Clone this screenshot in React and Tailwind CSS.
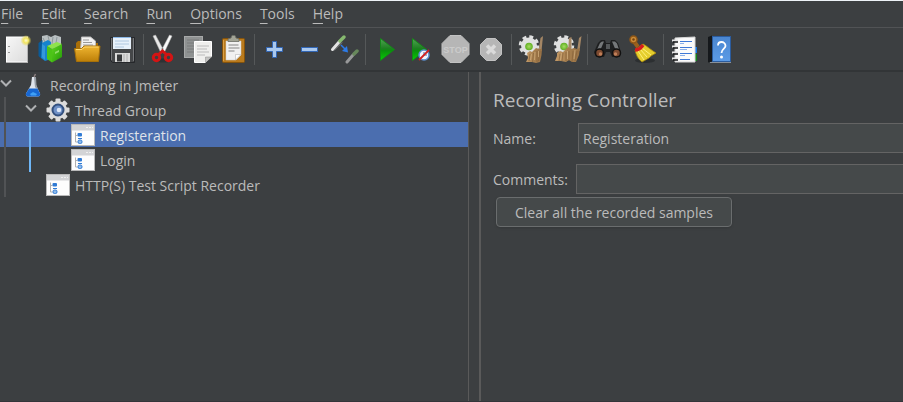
import React from "react";

function Icon({ children }) {
  return (
    <svg viewBox="0 0 35 42" className="h-[42px] w-[35px]" aria-hidden="true">
      {children}
    </svg>
  );
}

function Gradients() {
  return (
    <svg className="absolute h-0 w-0" aria-hidden="true">
      <defs>
        <linearGradient id="folder" x1="0" y1="0" x2="0" y2="1">
          <stop offset="0" stopColor="#efb530" />
          <stop offset="1" stopColor="#bd7f08" />
        </linearGradient>
        <linearGradient id="blue" x1="0" y1="0" x2="0" y2="1">
          <stop offset="0" stopColor="#4a86d0" />
          <stop offset="1" stopColor="#5b9be6" />
        </linearGradient>
        <linearGradient id="green" x1="0" y1="0" x2="0" y2="1">
          <stop offset="0" stopColor="#4fa552" />
          <stop offset="0.45" stopColor="#1f7f22" />
          <stop offset="0.55" stopColor="#0a8f0c" />
          <stop offset="1" stopColor="#06d006" />
        </linearGradient>
        <linearGradient id="lime" x1="0" y1="0" x2="1" y2="1">
          <stop offset="0" stopColor="#5fd51f" />
          <stop offset="1" stopColor="#239a08" />
        </linearGradient>
        <linearGradient id="paper" x1="0" y1="0" x2="1" y2="1">
          <stop offset="0" stopColor="#f7f7f7" />
          <stop offset="1" stopColor="#dcdcdc" />
        </linearGradient>
        <linearGradient id="straw" x1="0" y1="0" x2="1" y2="0">
          <stop offset="0" stopColor="#c39a68" />
          <stop offset="0.5" stopColor="#a9814f" />
          <stop offset="1" stopColor="#977145" />
        </linearGradient>
        <radialGradient id="star">
          <stop offset="0" stopColor="#fffbd0" />
          <stop offset="0.45" stopColor="#f2e561" />
          <stop offset="1" stopColor="#e8d84a" stopOpacity="0" />
        </radialGradient>
        <radialGradient id="lens">
          <stop offset="0" stopColor="#a7dd63" />
          <stop offset="1" stopColor="#5fae22" />
        </radialGradient>
      </defs>
    </svg>
  );
}

const NewIcon = () => (
  <Icon>
    <rect x="6.500" y="9" width="21" height="25" fill="url(#paper)" stroke="#fff" />
    <path d="M6 34.500h22M27.500 12v22" stroke="#b5b5b5" fill="none" />
    <path d="M8 18.500h2M8 24.500h2" stroke="#999" />
    <circle cx="26" cy="12.500" r="5.500" fill="url(#star)" />
  </Icon>
);

const TemplatesIcon = () => (
  <Icon>
    <path d="M7 8l5-1 4 2 4-2 6 2v9l-6 3-13-2z" fill="#b9c0c2" />
    <path d="M8 10l3 6M13 8l2 8M18 9l-1 7M22 9l-1 6" stroke="#8e989b" />
    <path d="M3.500 15l4-3v16l-2 2-2-2z" fill="#0a5a98" />
    <path d="M7 15l6-3 3 2v17l-6 2-4-3z" fill="#1683cd" />
    <path d="M7 16l3 2v14l-3-3z" fill="#3498da" />
    <path d="M12 18l10-4 5 2-10 5z" fill="#8fe34c" />
    <path d="M12 18l5 3v13.500l-5-3.500z" fill="#4cc417" />
    <path d="M17 21l10-5v13l-10 5.500z" fill="url(#lime)" />
    <path d="M20 24l4-2v2l-4 2z" fill="#8fdc68" />
  </Icon>
);

const OpenIcon = () => (
  <Icon>
    <path d="M6 15l2-2h5l1 2h14v14H6z" fill="#a96f08" />
    <path d="M11.500 9h9l5 4v10h-15z" fill="#f2f2f2" stroke="#bdbdbd" />
    <path d="M13 12h6M13 14.500h9M13 17h10" stroke="#9a9a9a" />
    <path d="M4.500 20.500h7l2.500-2.500h16l-1.500 15.500h-22z" fill="url(#folder)" stroke="#a87108" />
    <path d="M6 21.500h6l2.500-2.500h14" stroke="#ffd973" fill="none" />
  </Icon>
);

const SaveIcon = () => (
  <Icon>
    <path d="M5.500 9.500h24v25h-22l-2-2z" fill="#454749" stroke="#25272a" />
    <path d="M6.500 10v22M28.500 10v23" stroke="#77797c" />
    <rect x="8" y="9" width="18" height="12" fill="#e7f1fb" />
    <path d="M8 9.500h18" stroke="#8bb7e6" />
    <path d="M10 13h14M10 16h14M10 19h9" stroke="#b0c8e0" />
    <rect x="10" y="25" width="15" height="9" fill="#d9d9d9" />
    <rect x="12" y="26.500" width="5" height="7" fill="#37393b" />
    <path d="M19 26v8M22 26v8" stroke="#b0b0b0" />
  </Icon>
);

const CutIcon = () => (
  <Icon>
    <ellipse cx="17" cy="32.500" rx="8" ry="2" fill="#2f3234" />
    <path d="M7 8l2.500-1 8.500 16-3 2z" fill="#e9e9e9" stroke="#b5b5b5" strokeWidth="0.500" />
    <path d="M26 8l-2.500-1-8.500 16 3 2z" fill="#fafafa" stroke="#b5b5b5" strokeWidth="0.500" />
    <circle cx="16.500" cy="21" r="1" fill="#777" />
    <g fill="none" stroke="#d31414" strokeWidth="3">
      <ellipse cx="10.500" cy="29.500" rx="3.200" ry="3.200" />
      <ellipse cx="22.500" cy="29.500" rx="3.200" ry="3.200" />
      <path d="M12 27l4.500-4 4.500 4" />
    </g>
  </Icon>
);

const CopyIcon = () => (
  <Icon>
    <rect x="3.500" y="8.500" width="18" height="21" fill="#8f9292" stroke="#a7a9a9" />
    <path d="M6 12h12M6 15h12M6 18h7M6 21h7M6 24h7" stroke="#787b7b" />
    <path d="M13.500 13.500h17v15l-6 6h-11z" fill="#efefed" stroke="#fff" />
    <path d="M16 18h12M16 21h10M16 24h12M16 27h8" stroke="#bbb" />
    <path d="M24.500 34.500v-5.500h6z" fill="#c4c4c2" stroke="#8a8a8a" strokeWidth="0.500" />
  </Icon>
);

const PasteIcon = () => (
  <Icon>
    <rect x="6.500" y="10.500" width="22" height="24" rx="1" fill="#b97a1c" stroke="#85530c" />
    <path d="M7.500 12v21" stroke="#daa047" />
    <path d="M10 13h15v14l-5 5H10z" fill="#f1f1f1" stroke="#ccc" strokeWidth="0.500" />
    <path d="M12.500 17h10M12.500 20h11M12.500 23h6" stroke="#858585" />
    <path d="M19.500 32v-5.500h5.500z" fill="#fff" stroke="#aaa" strokeWidth="0.500" />
    <path d="M12 13.500v-2.500l3-1 1-2.500h3l1 2.500 3 1v2.500z" fill="#a2a496" stroke="#6c6e66" strokeWidth="0.800" />
  </Icon>
);

const ExpandIcon = () => (
  <Icon>
    <path d="M15.500 13.500h4v6h6v4h-6v6h-4v-6h-6v-4h6z" fill="#a9c8ee" stroke="#3266b4" />
  </Icon>
);

const CollapseIcon = () => (
  <Icon>
    <rect x="9.500" y="19.500" width="16" height="4" fill="#a9c8ee" stroke="#3266b4" />
  </Icon>
);

const ToggleIcon = () => (
  <Icon>
    <path d="M5.500 21.500l7-8" stroke="#e3e3e3" strokeWidth="3" strokeLinecap="round" />
    <path d="M13 13l4-4" stroke="#86b96f" strokeWidth="3.500" strokeLinecap="round" />
    <path d="M7 22.500l8-8" stroke="#8a8d8e" />
    <path d="M14 17l5 5" stroke="#2c7be8" strokeWidth="1.500" />
    <path d="M21 24.500l-6-1.500 5-5z" fill="#2c7be8" />
    <g opacity="0.600">
      <path d="M20 34l6-7" stroke="#d5d5d5" strokeWidth="3" strokeLinecap="round" />
      <path d="M27 26l3-3" stroke="#86b96f" strokeWidth="3.500" strokeLinecap="round" />
    </g>
  </Icon>
);

const StartIcon = () => (
  <Icon>
    <path d="M12.500 10.500l14 11-14 11z" fill="url(#green)" stroke="#0c8f10" strokeWidth="0.800" />
  </Icon>
);

const StartNoPauseIcon = () => (
  <Icon>
    <path d="M9.500 10.500l14 11-14 11z" fill="url(#green)" stroke="#0c8f10" strokeWidth="0.800" />
    <circle cx="21" cy="27" r="5" fill="#f1f5fb" stroke="#5c8fd0" strokeWidth="1.500" />
    <path d="M21 24v3h3" stroke="#4773ad" fill="none" />
    <path d="M16 32l10-10" stroke="#d12222" strokeWidth="1.800" />
  </Icon>
);

const StopIcon = () => (
  <Icon>
    <path d="M12 7.500h11l8 8v11l-8 8H12l-8-8v-11z" fill="#b6b6b6" stroke="#c2c2c2" />
    <text x="17.500" y="25" textAnchor="middle" fill="#cbcbcb" className="font-['Liberation_Sans'] text-[9px] font-bold">STOP</text>
  </Icon>
);

const ShutdownIcon = () => (
  <Icon>
    <path d="M13.500 10.500h9l6 6v10l-6 6h-9l-6-6v-10z" fill="#b6b6b6" stroke="#c2c2c2" />
    <path d="M14 17.500l8 8M22 17.500l-8 8" stroke="#dadada" strokeWidth="3.500" />
  </Icon>
);

const GearBase = () => (
  <g>
    <circle cx="15" cy="17.500" r="8.500" fill="none" stroke="#dedfdf" strokeWidth="3.500" strokeDasharray="3.800 2.880" />
    <circle cx="15" cy="17.500" r="8" fill="#e0e1e1" />
    <circle cx="15" cy="18.500" r="3.800" fill="url(#lens)" />
  </g>
);

const ClearIcon = () => (
  <Icon>
    <GearBase />
    <path d="M24.500 23l2-13 2.500-2-1.500 15z" fill="#a58765" />
    <path d="M13 25l3-2 2 1 4-4 3 1 3 0-.500 6-1.500 7-4 1-4-1-6 0 2-4z" fill="url(#straw)" />
    <path d="M16 26l-1 7M19.500 25l-1 9M23 23v11M26 23l-1.500 10" stroke="#86633b" strokeWidth="0.700" />
    <path d="M17.500 26l-1 6M21 24l-.500 8M24.500 23v6" stroke="#d3b080" strokeWidth="0.700" />
  </Icon>
);

const ClearAllIcon = () => (
  <Icon>
    <GearBase />
    <path d="M19 23l1-13 2.500-1v14zM28 23l2-13 2.500-2-2 15z" fill="#a58765" />
    <path d="M8 25l3-2 3 1 5-5 3 2 3-1 3 1 3-1-1 7-3 7-4 0-3-2-3 2-5-1-6 0 2-5z" fill="url(#straw)" />
    <path d="M11 26l-1 7M14 25l-1 8M17 24v9M20 23v10M24 23l-1 11M28 23l-2 10" stroke="#86633b" strokeWidth="0.700" />
    <path d="M12.500 25l-1 7M18.500 23v8M26 22l-1 9" stroke="#d3b080" strokeWidth="0.700" />
  </Icon>
);

const SearchIcon = () => (
  <Icon>
    <path d="M8 15l3-3h4l1 3h4l1-3h4l3 3 3 9-1 5h-8l-2-5h-4l-2 5H6l-2-5z" fill="#1e1f20" />
    <path d="M10 15l2-1.500h2l-3 7-4 1zM22 13.500h3l2 2 2 6-4-1z" fill="#75787a" />
    <path d="M16 16h4v5h-4z" fill="#55585a" />
    <circle cx="9.500" cy="25" r="4" fill="#7c4a30" stroke="#111" strokeWidth="1.500" />
    <circle cx="26.500" cy="25" r="4" fill="#7c4a30" stroke="#111" strokeWidth="1.500" />
    <circle cx="10.500" cy="26" r="1.700" fill="#c07f58" />
    <circle cx="25.500" cy="26" r="1.700" fill="#c07f58" />
  </Icon>
);

const BroomIcon = () => (
  <Icon>
    <ellipse cx="20" cy="32.500" rx="10" ry="2.500" fill="#2c2f31" />
    <path d="M8 12l5 7" stroke="#9b601c" strokeWidth="4" />
    <circle cx="8.500" cy="11.500" r="3.500" fill="#c98a38" stroke="#8e5717" strokeWidth="1.500" />
    <circle cx="8.500" cy="11.500" r="1.200" fill="#754410" />
    <path d="M10 22l8-6c4 2 8 6 13 9l-5 3-2 2-7 4c-4-3-6-7-7-12z" fill="#e5ce2d" stroke="#a98a0c" strokeWidth="0.800" />
    <path d="M13 23l6 9M15 21l7 8M17 20l9 7" stroke="#fff17a" />
    <path d="M10 22c3 0 6-2 8-5" stroke="#d51d1d" strokeWidth="3.500" fill="none" />
  </Icon>
);

const LogIcon = () => (
  <Icon>
    <rect x="27" y="19" width="4" height="6" fill="#1477e8" />
    <rect x="27" y="26" width="4" height="7" fill="#14861c" />
    <path d="M9 10l20-1v25H9z" fill="#fbfbfb" stroke="#d6d6d6" />
    <path d="M14 13.500h12M14 19.500h12M14 25.500h12M14 31.500h10" stroke="#3f78d6" />
    <path d="M14 15.500h4M14 21.500h7M14 27.500h5" stroke="#8db0e8" />
    <path d="M6 12.500h6M6 18.500h6M6 24.500h6M6 30.500h6" stroke="#e5e5e5" strokeWidth="2" />
    <path d="M7 14h5M7 20h5M7 26h5M7 32h5" stroke="#17191a" strokeWidth="1.500" />
  </Icon>
);

const HelpIcon = () => (
  <Icon>
    <path d="M7 9l4-1.500v26L7 34.500z" fill="#15181b" />
    <rect x="11.500" y="8.500" width="18" height="25" fill="url(#blue)" stroke="#2b5c9e" />
    <path d="M9 34.500h21" stroke="#d5e3f5" strokeWidth="0.500" />
    <path d="M17 17.500c0-2.500 1.500-3.500 3.500-3.500s4 1.500 4 4-4 3-4 7" stroke="#fff" strokeWidth="1.800" fill="none" />
    <circle cx="20.500" cy="29" r="1.500" fill="#fff" />
  </Icon>
);

const menus = ["File", "Edit", "Search", "Run", "Options", "Tools", "Help"];

const toolGroups = [
  [["New", NewIcon], ["Templates", TemplatesIcon], ["Open", OpenIcon], ["Save", SaveIcon]],
  [["Cut", CutIcon], ["Copy", CopyIcon], ["Paste", PasteIcon]],
  [["Expand all", ExpandIcon], ["Collapse all", CollapseIcon], ["Toggle", ToggleIcon]],
  [["Start", StartIcon], ["Start no pauses", StartNoPauseIcon], ["Stop", StopIcon], ["Shutdown", ShutdownIcon]],
  [["Clear", ClearIcon], ["Clear all", ClearAllIcon]],
  [["Search", SearchIcon], ["Reset search", BroomIcon]],
  [["Function helper", LogIcon], ["Help", HelpIcon]],
];

function Chevron() {
  return (
    <svg viewBox="0 0 12 12" className="mb-1 size-3 shrink-0" fill="none" stroke="#afb1b3" strokeWidth="2" aria-hidden="true">
      <path d="M1 3.500l5 5 5-5" />
    </svg>
  );
}

function FlaskIcon() {
  return (
    <svg viewBox="0 0 24 24" className="size-6 shrink-0" aria-hidden="true">
      <path d="M11 4h3.500l.5 8 4 8.500c.5 2-.5 3-2 3H7c-1.500 0-2.500-1-2-3l5-8.500z" fill="#dfe5ec" />
      <path d="M13 4l2 .2.500 8 1.500 4-3-2z" fill="#969da5" />
      <path d="M8 15.500h8.500l2.500 5c.5 2-.5 3-2 3H7c-1.500 0-2.500-1-2-3z" fill="#1767d2" />
      <path d="M9 21l3-2 4 2-1 1.500h-5z" fill="#3fa0f5" />
      <path d="M13 4l1.500-3" stroke="#8b7f80" strokeWidth="1.500" />
    </svg>
  );
}

function GearIcon() {
  return (
    <svg viewBox="0 0 24 24" className="size-6 shrink-0" aria-hidden="true">
      <g fill="#dcdcdc">
        <rect x="9.500" y="0.500" width="5" height="23" rx="1" />
        <rect x="9.500" y="0.500" width="5" height="23" rx="1" transform="rotate(45 12 12)" />
        <rect x="9.500" y="0.500" width="5" height="23" rx="1" transform="rotate(90 12 12)" />
        <rect x="9.500" y="0.500" width="5" height="23" rx="1" transform="rotate(135 12 12)" />
        <circle cx="12" cy="12" r="9" />
      </g>
      <circle cx="12" cy="12" r="5.500" fill="#6f90c6" stroke="#33507f" strokeWidth="2" />
      <circle cx="13" cy="12" r="2.300" fill="#dbe6f7" />
    </svg>
  );
}

function ControllerIcon() {
  return (
    <svg viewBox="0 0 24 24" className="size-6 shrink-0" aria-hidden="true">
      <rect x="0.500" y="1.500" width="23" height="21" fill="#fdfdfd" stroke="#b9b9b9" />
      <rect x="1" y="2" width="22" height="5.500" fill="#d3d4d6" />
      <path d="M15 4.500h2M18 4.500h2M21 4.500h1" stroke="#f0f0f0" />
      <path d="M4.500 9.500v9.500h2M4.500 12.500h2" stroke="#b0b0b0" fill="none" />
      <rect x="6.500" y="10" width="4.500" height="3.500" rx="1" fill="#2f7ad4" />
      <path d="M7 15.500h4" stroke="#2f7ad4" />
      <rect x="7" y="17" width="4" height="3.500" rx="1.500" fill="#8db9ea" stroke="#2f7ad4" />
    </svg>
  );
}

function TreeRow({ icon, label, pad, open, selected }) {
  return (
    <div
      role="treeitem"
      aria-selected={!!selected}
      aria-expanded={open}
      className={`flex h-[25px] items-center ${pad} ${selected ? "bg-[#4b6eaf] text-[#dfe3ea]" : ""}`}
    >
      {open && <Chevron />}
      <span className={open ? "ml-[9px] flex" : "flex"}>{icon}</span>
      <span className="ml-[5px] pt-[2px] whitespace-nowrap">{label}</span>
    </div>
  );
}

export default function App() {
  return (
    <div className="flex min-h-screen flex-col border-t border-b border-t-[#eef3f7] border-b-[#33353a] bg-[#3c3f41] font-['Open_Sans','Noto_Sans',sans-serif] text-[14px] leading-5 text-[#bbbbbb]">
      <Gradients />
      <nav className="flex h-[27px] items-center gap-[18px] border-b border-[#515355] pl-px">
        {menus.map((m) => (
          <button key={m} type="button" className="leading-5">
            <span className="underline decoration-1 underline-offset-4">{m[0]}</span>
            {m.slice(1)}
          </button>
        ))}
      </nav>
      <div role="toolbar" className="flex h-11 border-b-2 border-[#323537]">
        {toolGroups.map((group, i) => (
          <React.Fragment key={i}>
            {i > 0 && (
              <div className="flex w-[6px] shrink-0 items-center justify-center">
                <div className="h-[31px] w-px bg-[#555859]" />
              </div>
            )}
            {group.map(([name, Glyph]) => (
              <button key={name} type="button" aria-label={name} className="shrink-0">
                <Glyph />
              </button>
            ))}
          </React.Fragment>
        ))}
      </div>
      <main className="flex grow">
        <section role="tree" aria-label="Test plan" className="w-[469px] shrink-0 border-r border-[#5a5a5a]">
          <TreeRow pad="pl-0" open icon={<FlaskIcon />} label="Recording in Jmeter" />
          <div role="group" className="relative">
            <TreeRow pad="pl-[25px]" open icon={<GearIcon />} label="Thread Group" />
            <div role="group" className="relative">
              <TreeRow pad="pl-[71px]" selected icon={<ControllerIcon />} label="Registeration" />
              <TreeRow pad="pl-[71px]" icon={<ControllerIcon />} label="Login" />
              <div className="absolute inset-y-0 left-[29px] w-[2px] bg-[#6fb7f7]" />
            </div>
            <TreeRow pad="pl-[46px]" icon={<ControllerIcon />} label="HTTP(S) Test Script Recorder" />
            <div className="absolute inset-y-0 left-1 w-[2px] bg-[#515355]" />
          </div>
        </section>
        <section className="ml-[10px] min-w-0 grow border-l-2 border-[#5a5a5a] pt-4 pl-3">
          <h1 className="text-[19px] leading-6">Recording Controller</h1>
          <div className="mt-[11px] flex items-center">
            <label htmlFor="name" className="w-[85px] shrink-0 pt-[2px]">Name:</label>
            <input id="name" type="text" defaultValue="Registeration" className="h-[30px] min-w-0 grow border border-r-0 border-[#646464] bg-[#45494a] px-1 outline-none" />
          </div>
          <div className="mt-[11px] flex items-center">
            <label htmlFor="comments" className="w-[83px] shrink-0 pt-[2px]">Comments:</label>
            <input id="comments" type="text" className="h-[30px] min-w-0 grow border border-r-0 border-[#646464] bg-[#45494a] px-1 outline-none" />
          </div>
          <button type="button" className="mt-[3px] ml-[3px] h-[30px] w-[236px] rounded-[4px] border border-[#6a6d6e] bg-[#45494a] pt-[2px] shadow-sm">
            Clear all the recorded samples
          </button>
        </section>
      </main>
    </div>
  );
}
